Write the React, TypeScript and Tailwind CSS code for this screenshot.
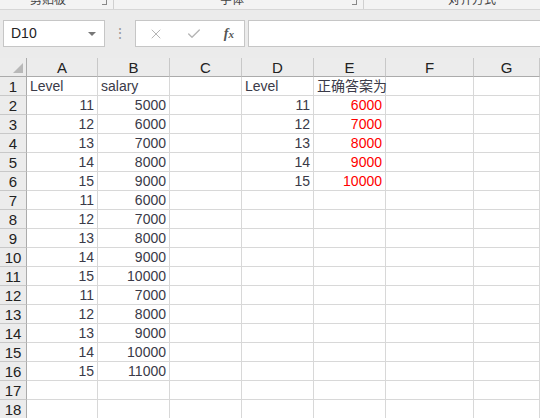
import { X, Check } from 'lucide-react';

const AB: [string, string][] = [
  ['Level', 'salary'],
  ['11', '5000'], ['12', '6000'], ['13', '7000'], ['14', '8000'], ['15', '9000'],
  ['11', '6000'], ['12', '7000'], ['13', '8000'], ['14', '9000'], ['15', '10000'],
  ['11', '7000'], ['12', '8000'], ['13', '9000'], ['14', '10000'], ['15', '11000'],
];

const DE: [string, string][] = [
  ['Level', '正确答案为'],
  ['11', '6000'], ['12', '7000'], ['13', '8000'], ['14', '9000'], ['15', '10000'],
];

const COLS = ['A', 'B', 'C', 'D', 'E', 'F', 'G'];

function Cell({ value, red, header }: { value?: string; red?: boolean; header?: boolean }) {
  const isNum = value !== undefined && /^\d+$/.test(value);
  return (
    <div
      className={`h-[19px] border-r border-b border-[#d8d8d8] px-[3px] text-[14px] leading-[18px] whitespace-nowrap overflow-visible ${
        isNum ? 'text-right' : 'text-left'
      } ${red ? 'text-[#ff0000]' : 'text-[#3a3a48]'} ${header ? '' : ''}`}
    >
      {value}
    </div>
  );
}

export default function App() {
  const rows = Array.from({ length: 18 }, (_, i) => i + 1);
  return (
    <div className="w-[540px] h-[418px] overflow-hidden bg-[#ebebeb] font-['Liberation_Sans','Noto_Sans_CJK_SC',sans-serif]">
      {/* Ribbon group labels (cut off) */}
      <div className="h-[10px] bg-[#f3f3f3] border-b border-[#d6d6d6] overflow-hidden flex text-[12px] text-[#444] leading-[12px]">
        <div className="w-[114px] border-r border-[#d0d0d0] relative">
          <span className="block -mt-[6px] pl-[30px]">剪贴板</span>
          <span className="absolute right-[6px] top-0 w-[5px] h-[5px] border-r border-b border-[#888]" />
        </div>
        <div className="w-[250px] border-r border-[#d0d0d0] relative">
          <span className="block -mt-[6px] pl-[106px]">字体</span>
          <span className="absolute right-[6px] top-0 w-[5px] h-[5px] border-r border-b border-[#888]" />
        </div>
        <div className="flex-1">
          <span className="block -mt-[6px] pl-[84px]">对齐方式</span>
        </div>
      </div>

      {/* Formula bar */}
      <div className="h-[48px] pt-[10px] flex items-start">
        <div className="ml-[3px] w-[102px] h-[27px] bg-white border border-[#c6c6c6] flex items-center justify-between pl-[7px] pr-[8px]">
          <span className="text-[14px] text-[#222]">D10</span>
          <span className="w-0 h-0 border-l-[4px] border-r-[4px] border-t-[4px] border-l-transparent border-r-transparent border-t-[#777]" />
        </div>
        <div className="w-[30px] h-[27px] flex items-center justify-center text-[#999] text-[14px]">⋮</div>
        <div className="w-[110px] h-[27px] bg-white border border-[#c6c6c6] flex items-center justify-between pl-[12px] pr-[10px]">
          <X size={16} strokeWidth={1.5} className="text-[#b5b5b5]" />
          <Check size={16} strokeWidth={2} className="text-[#b5b5b5]" />
          <span className="font-['Liberation_Serif',serif] italic text-[14px] text-[#555] font-bold">
            f<span className="text-[11px]">x</span>
          </span>
        </div>
        <div className="ml-[3px] flex-1 h-[27px] bg-white border border-[#c6c6c6] border-r-0" />
      </div>

      {/* Sheet grid */}
      <div className="bg-white grid grid-cols-[27px_71px_72px_72px_72px_72px_88px_1fr]">
        {/* Column headers */}
        <div className="h-[19px] bg-[#ececec] border-r border-b border-[#ababab] relative">
          <span className="absolute right-[3px] bottom-[3px] w-0 h-0 border-l-[10px] border-t-[10px] border-l-transparent border-t-transparent border-b-0 border-r-0" style={{}} />
          <svg className="absolute right-[3px] bottom-[3px]" width="10" height="10" viewBox="0 0 10 10">
            <polygon points="10,0 10,10 0,10" fill="#b8b8b8" />
          </svg>
        </div>
        {COLS.map(c => (
          <div
            key={c}
            className="h-[19px] bg-[#ececec] border-r border-b border-r-[#c8c8c8] border-b-[#ababab] text-center text-[15px] leading-[19px] text-[#222]"
          >
            {c}
          </div>
        ))}

        {rows.map(r => {
          const ab = AB[r - 1];
          const de = DE[r - 1];
          return [
            <div
              key={`h${r}`}
              className="h-[19px] bg-[#ececec] border-r border-b border-r-[#ababab] border-b-[#c8c8c8] text-center text-[15px] leading-[19px] text-[#222]"
            >
              {r}
            </div>,
            <Cell key={`a${r}`} value={ab?.[0]} />,
            <Cell key={`b${r}`} value={ab?.[1]} />,
            <Cell key={`c${r}`} />,
            <Cell key={`d${r}`} value={de?.[0]} />,
            <Cell key={`e${r}`} value={de?.[1]} red={r > 1} />,
            <Cell key={`f${r}`} />,
            <Cell key={`g${r}`} />,
          ];
        })}
      </div>
    </div>
  );
}
